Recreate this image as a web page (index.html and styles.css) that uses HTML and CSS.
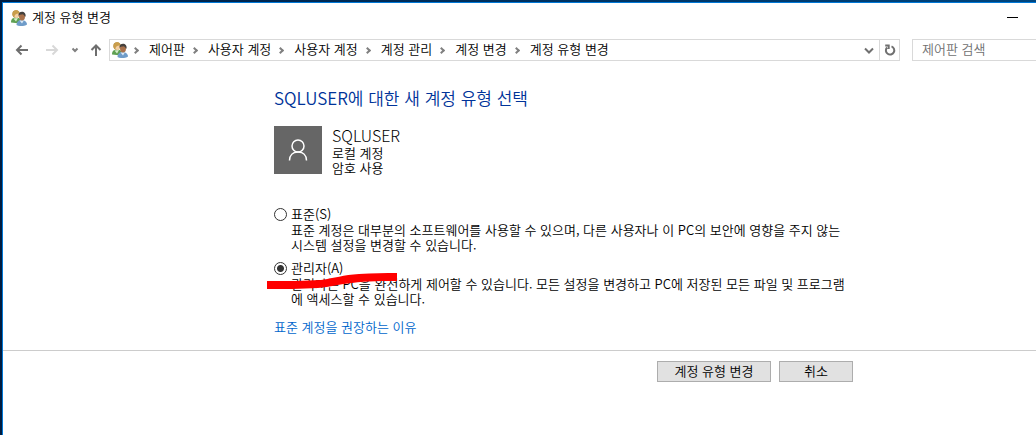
FILE: index.html
```html
<!DOCTYPE html>
<html lang="ko">

<head>
    <meta charset="UTF-8">
    <meta name="viewport" content="width=device-width, initial-scale=1.0">
    <title>계정 유형 변경</title>
    <link rel="stylesheet" href="styles.css">
</head>

<body>
    <svg class="defs" width="0" height="0" aria-hidden="true">
        <symbol id="users" viewBox="0 0 16 16">
            <path d="M0 12.500C0 9 1.500 7.500 5 7.500s5 2 5 5l-1 1z" fill="#5fa052" />
            <path d="M2.500 8.500l2.500 3 2-3.500z" fill="#d5edc9" />
            <circle cx="5" cy="4" r="3.700" fill="#b58a3c" />
            <ellipse cx="5.500" cy="5" rx="2.500" ry="3" fill="#f3cfa4" />
            <path d="M1.500 5C1.500 2 3 .300 5.200.300S8.500 2 8.500 3.500C6 3 4 4 3 7z" fill="#c99e4b" />
            <path d="M5.500 15c0-3 2-5 5-5s5.500 2 5.500 4.500c-2 2-8 2-10.500.500z" fill="#6f9cc9" />
            <path d="M8.500 10.500l2.500 3 2-3.200z" fill="#d9e9f7" />
            <ellipse cx="11" cy="6.500" rx="3" ry="4" fill="#a9714b" />
            <path d="M7.500 6C7.200 3 8.800 1.800 11 1.800s4 1.500 3.600 5c-1-.500-1.300-1.600-2.600-2.500-1.500.200-3 .200-4.500 1.700z" fill="#44403d" />
        </symbol>
    </svg>
    <div class="window">
        <header class="title-bar">
            <svg class="users-icon"><use href="#users" /></svg>
            <span class="title">계정 유형 변경</span>
            <button class="minimize" aria-label="최소화"></button>
        </header>
        <nav class="nav-bar">
            <button class="nav-btn" aria-label="뒤로">
                <svg width="14" height="12" viewBox="0 0 14 12"><path d="M13 6H2M6.500 1.500L2 6l4.500 4.500" stroke="#6e6e6e" /></svg>
            </button>
            <button class="nav-btn forward" aria-label="앞으로">
                <svg width="14" height="12" viewBox="0 0 14 12"><path d="M1 6h11M7.500 1.500L12 6l-4.500 4.500" stroke="#d8d8d8" /></svg>
            </button>
            <button class="nav-btn recent" aria-label="최근 위치">
                <svg width="8" height="12" viewBox="0 0 8 12"><path d="M1.500 4.500L4 7l2.500-2.500" stroke="#808080" /></svg>
            </button>
            <button class="nav-btn up" aria-label="위로">
                <svg width="12" height="12" viewBox="0 0 12 12"><path d="M6 12V1.500M1.500 6L6 1.500 10.500 6" stroke="#6e6e6e" /></svg>
            </button>
            <div class="address">
                <svg class="users-icon"><use href="#users" /></svg>
                <ol class="crumbs">
                    <li><a href="#">제어판</a></li>
                    <li><a href="#">사용자 계정</a></li>
                    <li><a href="#">사용자 계정</a></li>
                    <li><a href="#">계정 관리</a></li>
                    <li><a href="#">계정 변경</a></li>
                    <li><a href="#">계정 유형 변경</a></li>
                </ol>
                <button class="address-btn" aria-label="이전 위치">
                    <svg width="10" height="12" viewBox="0 0 10 12"><path d="M1 4.500l4 4 4-4" stroke="#707070" /></svg>
                </button>
                <button class="address-btn refresh" aria-label="새로 고침">
                    <svg width="12" height="12" viewBox="0 0 12 12"><path d="M7.500 2.400A4.200 4.200 0 1 1 3 3.500M1.200 1.600h3.500v3.500" stroke="#707070" /></svg>
                </button>
            </div>
            <input class="search" type="text" placeholder="제어판 검색" aria-label="제어판 검색">
        </nav>
        <main class="content">
            <h1>SQLUSER에 대한 새 계정 유형 선택</h1>
            <div class="account">
                <div class="avatar">
                    <svg width="20" height="24" viewBox="0 0 20 24"><circle cx="10" cy="8" r="6" /><path d="M1.500 22.500C1.500 17 5 14 10 14s8.500 3 8.500 8.500" /></svg>
                </div>
                <div>
                    <div class="account-name">SQLUSER</div>
                    <div>로컬 계정</div>
                    <div>암호 사용</div>
                </div>
            </div>
            <div class="option">
                <input type="radio" name="type" id="standard">
                <label for="standard">표준(S)</label>
                <p>표준 계정은 대부분의 소프트웨어를 사용할 수 있으며, 다른 사용자나 이 PC의 보안에 영향을 주지 않는 시스템 설정을 변경할 수 있습니다.</p>
            </div>
            <div class="option">
                <input type="radio" name="type" id="admin" checked>
                <label for="admin">관리자(A)</label>
                <p>관리자는 PC을 완전하게 제어할 수 있습니다. 모든 설정을 변경하고 PC에 저장된 모든 파일 및 프로그램에 액세스할 수 있습니다.</p>
                <svg class="marker" width="132" height="18" viewBox="0 0 132 18"><path d="M1 9c22 0 38 0 54-1 14-2 22-5 38-6 14-1 26-1 38-1v8c-13 0-30 0-45 2-12 1-22 4-34 5-17 1-34 1-51 1z" fill="#ff0000" /></svg>
            </div>
            <a class="why" href="#">표준 계정을 권장하는 이유</a>
        </main>
        <footer class="footer">
            <div class="buttons">
                <button class="btn primary">계정 유형 변경</button>
                <button class="btn">취소</button>
            </div>
        </footer>
    </div>
</body>

</html>
```
FILE: styles.css
```css
*,
*::before {
    margin: 0;
    padding: 0;
    box-sizing: border-box;
}

body {
    min-height: 100vh;
    display: flex;
    padding: 2px 0 0 2px;
    background: linear-gradient(90deg, #001c40, #00457e);
    font-family: "Noto Sans CJK KR", sans-serif;
    font-size: 13px;
    font-weight: 350;
    line-height: 15px;
    color: #000;
    overflow-x: hidden;
}

button,
input {
    font: inherit;
    color: inherit;
}

a {
    color: inherit;
    text-decoration: none;
}

.defs {
    position: absolute;
}

.window {
    flex: 1;
    min-width: 0;
    background: #fff;
    border-top: 1px solid #0078d7;
    border-left: 1px solid #0078d7;
}

.users-icon {
    width: 16px;
    height: 16px;
    flex: none;
}

/* title bar */
.title-bar {
    display: flex;
    align-items: center;
    height: 29px;
    padding: 0 18px 0 8px;
}

.title {
    flex: 1;
    margin-left: 5px;
    padding-bottom: 2px;
}

.minimize {
    width: 11px;
    height: 1px;
    border: none;
    background: #000;
}

/* navigation */
.nav-bar {
    display: flex;
    align-items: center;
    margin-top: 7px;
    padding-left: 12px;
}

.nav-btn,
.address-btn {
    display: flex;
    align-items: center;
    justify-content: center;
    border: none;
    background: none;
}

.nav-btn svg,
.address-btn svg {
    fill: none;
    stroke-width: 2;
}

.forward {
    margin-left: 16px;
}

.recent {
    margin-left: 12px;
}

.up {
    margin: 0 7px 0 11px;
}

.address {
    flex: 1;
    display: flex;
    align-items: center;
    height: 22px;
    padding-left: 2px;
    border: 1px solid #d9d9d9;
}

.crumbs {
    flex: 1;
    display: flex;
    list-style: none;
    white-space: nowrap;
}

.crumbs li {
    display: flex;
    align-items: center;
}

.crumbs a {
    padding-bottom: 4px;
}

.crumbs li::before {
    content: "";
    width: 5px;
    height: 5px;
    margin: 0 11px 0 5px;
    border: solid #808080;
    border-width: 2px 2px 0 0;
    transform: rotate(45deg);
}

.crumbs li + li::before {
    margin-left: 7px;
}

.address-btn {
    width: 20px;
    height: 20px;
}

.refresh {
    border-left: 1px solid #d9d9d9;
}

.search {
    width: 124px;
    height: 22px;
    margin-left: 12px;
    padding: 0 9px 4px;
    border: 1px solid #d9d9d9;
    border-right: none;
    border-radius: 0;
}

.search::placeholder {
    color: #707070;
}

/* content */
.content {
    max-width: 851px;
    padding: 26px 0 16px 271px;
}

h1 {
    font-size: 17px;
    line-height: 22px;
    font-weight: 350;
    color: #003399;
}

.account {
    display: flex;
    align-items: flex-start;
    gap: 10px;
    margin: 17px 0 31px;
}

.avatar {
    display: flex;
    align-items: center;
    justify-content: center;
    width: 48px;
    height: 48px;
    background: #666;
}

.avatar svg {
    fill: none;
    stroke: #fff;
    stroke-width: 1.5;
}

.account-name {
    font-size: 16px;
    line-height: 19px;
    font-weight: 300;
}

.option {
    position: relative;
    display: grid;
    grid-template-columns: 13px 1fr;
    column-gap: 4px;
    align-items: center;
    margin-bottom: 8px;
}

.option label {
    padding-bottom: 2px;
}

.option input {
    appearance: none;
    width: 13px;
    height: 13px;
    border: 1px solid #333;
    border-radius: 50%;
    background: #fff;
}

.option input:checked {
    background: radial-gradient(circle, #333 3px, #fff 4px);
}

.option p {
    grid-column: 2;
    margin-top: -1px;
    word-break: break-all;
}

/* red stroke over the admin option */
.marker {
    position: absolute;
    left: -8px;
    top: 12px;
}

.why {
    display: inline-block;
    margin-top: 5px;
    color: #0066cc;
}

/* footer */
.footer {
    border-top: 1px solid #ccc;
    padding-top: 10px;
}

.buttons {
    display: flex;
    justify-content: flex-end;
    gap: 8px;
    max-width: 850px;
}

.btn {
    width: 74px;
    height: 21px;
    padding-bottom: 2px;
    border: 1px solid #adadad;
    background: #e1e1e1;
}

.primary {
    width: 114px;
}
```
